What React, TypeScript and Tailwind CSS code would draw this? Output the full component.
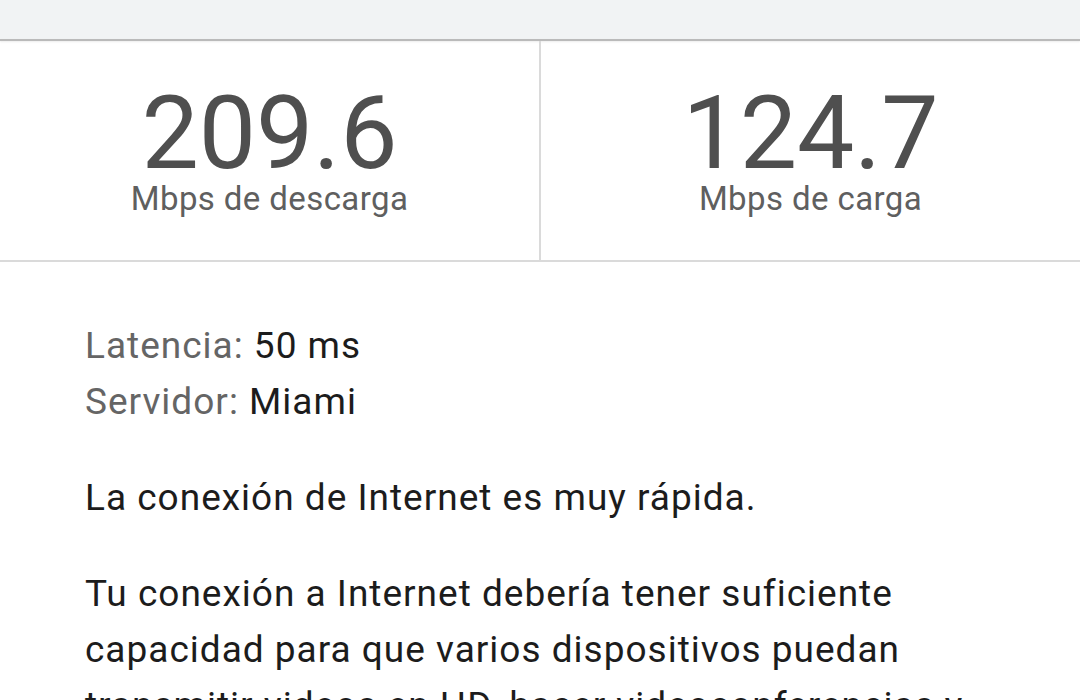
const stats = [
  { value: "209.6", label: "Mbps de descarga" },
  { value: "124.7", label: "Mbps de carga" },
];

const App = () => {
  return (
    <div className="w-full min-h-screen bg-white font-['Roboto',sans-serif] overflow-hidden">
      <div className="h-[39px] bg-[#f1f3f4]"></div>
      <div className="h-[2px] bg-[#bababa] shadow-[0_1px_2px_rgba(0,0,0,0.08)]"></div>

      <div className="grid grid-cols-[541px_1fr] border-b-2 border-[#dadada]">
        {stats.map((s, i) => (
          <div
            key={s.value}
            className={
              "flex flex-col items-center pt-[46px] pb-[41px] " +
              (i === 0 ? "border-r-2 border-[#dadada]" : "")
            }
          >
            <div className="text-[102px] leading-[92px] text-[#4f4f4f]">{s.value}</div>
            <div className="text-[33px] leading-[40px] tracking-[0.4px] text-[#5f5f5f]">{s.label}</div>
          </div>
        ))}
      </div>

      <div className="pl-[85px] pr-[70px] pt-[56px] text-[37px] leading-[56px] tracking-[1px] text-[#1c1c1c]">
        <div>
          <span className="text-[#656565]">Latencia:</span> 50 ms
        </div>
        <div>
          <span className="text-[#656565]">Servidor:</span> Miami
        </div>
        <p className="mt-[40px]">La conexión de Internet es muy rápida.</p>
        <p className="mt-[40px]">
          Tu conexión a Internet debería tener suficiente capacidad para que varios dispositivos puedan
          transmitir videos en HD, hacer videoconferencias y jugar al mismo tiempo.
        </p>
      </div>
    </div>
  );
};

export default App;
